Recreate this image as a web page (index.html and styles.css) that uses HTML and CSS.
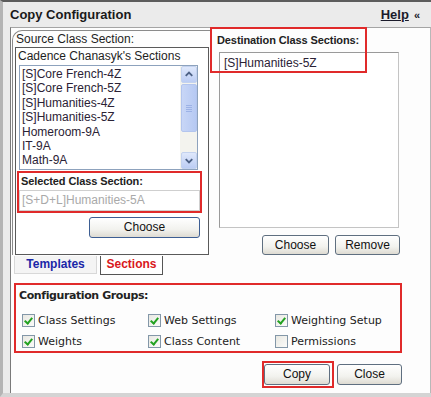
FILE: index.html
```html
<!DOCTYPE html>
<html>
<head>
<meta charset="utf-8">
<link rel="stylesheet" href="styles.css">
</head>
<body>
<div class="win">
  <div class="titlebar">
    <span class="title">Copy Configuration</span>
    <span class="helpwrap"><a class="help">Help</a><span class="raquo">«</span></span>
  </div>
  <div class="panel">
    <div class="top">
      <div class="left">
        <div class="tabpanel">
          <div class="srclabel">Source Class Section:</div>
          <div class="inner">
            <div class="listhead">Cadence Chanasyk's Sections</div>
            <div class="listbox">
              <ul class="items">
                <li>[S]Core French-4Z</li>
                <li>[S]Core French-5Z</li>
                <li>[S]Humanities-4Z</li>
                <li>[S]Humanities-5Z</li>
                <li>Homeroom-9A</li>
                <li>IT-9A</li>
                <li>Math-9A</li>
              </ul>
              <div class="scrollbar">
                <div class="sb-btn"><svg width="15" height="15" viewBox="0 0 15 15"><path d="M4 9 L7.5 5.5 L11 9" fill="none" stroke="#4d6185" stroke-width="2"/></svg></div>
                <div class="sb-thumb"><span></span><span></span><span></span><span></span></div>
                <div class="sb-track"></div>
                <div class="sb-btn"><svg width="15" height="15" viewBox="0 0 15 15"><path d="M4 6 L7.5 9.5 L11 6" fill="none" stroke="#4d6185" stroke-width="2"/></svg></div>
              </div>
            </div>
            <div class="selected">
              <div class="sellabel">Selected Class Section:</div>
              <div class="seltext">[S+D+L]Humanities-5A</div>
            </div>
            <div class="btnrow-left"><button class="btn btn-blue btn-wide">Choose</button></div>
          </div>
        </div>
        <div class="tabs">
          <span class="tab tab-templates">Templates</span>
          <span class="tab tab-sections">Sections</span>
        </div>
      </div>
      <div class="right">
        <div class="destlabel">Destination Class Sections:</div>
        <div class="destlist"><div class="destitem">[S]Humanities-5Z</div></div>
        <div class="redmark"></div>
        <div class="btnrow-right">
          <button class="btn btn-choose2">Choose</button>
          <button class="btn btn-remove">Remove</button>
        </div>
      </div>
    </div>
    <div class="groups">
      <div class="groupslabel">Configuration Groups:</div>
      <div class="checks">
        <label class="chk"><span class="box on"></span>Class Settings</label>
        <label class="chk"><span class="box on"></span>Web Settings</label>
        <label class="chk"><span class="box on"></span>Weighting Setup</label>
        <label class="chk"><span class="box on"></span>Weights</label>
        <label class="chk"><span class="box on"></span>Class Content</label>
        <label class="chk"><span class="box"></span>Permissions</label>
      </div>
    </div>
    <div class="actions">
      <span class="copywrap"><button class="btn btn-copy">Copy</button></span>
      <button class="btn btn-close">Close</button>
    </div>
  </div>
</div>
</body>
</html>
```

FILE: styles.css
```css
* { box-sizing: border-box; }
html, body { margin: 0; padding: 0; }
body { width: 431px; height: 397px; overflow: hidden; font-family: "Liberation Sans", Arial, sans-serif; }

.win {
  width: 431px;
  height: 397px;
  background: #ebebeb;
  border-top: 2px solid #5c5c5c;
  border-left: 3px solid #b4b4b4;
  border-bottom: 4px solid #d4d4d4;
  display: flex;
  flex-direction: column;
}

.titlebar {
  height: 25px;
  display: flex;
  align-items: center;
  justify-content: space-between;
  padding: 0 11px 0 7px;
}
.title { font-weight: bold; font-size: 13px; color: #1a1a1a; }
.helpwrap { font-weight: bold; font-size: 12px; color: #1a1a2a; display: flex; align-items: center; gap: 5px; }
.help { text-decoration: underline; color: #1a1a2a; font-size: 13px; }
.raquo { font-size: 11px; }

.panel {
  flex: 1;
  margin-left: 7px;
  background: #fdfdfd;
  border-top: 1px solid #a4a4a4;
  border-left: 1px solid #7a7a7a;
  border-right: 1px solid #b8b8b8;
  display: flex;
  flex-direction: column;
}

.top { display: flex; }
.left { margin-left: 1px; margin-top: 2px; width: 198px; }
.tabpanel {
  border-top: 1px solid #8a8a8a;
  border-left: 1px solid #8a8a8a;
  border-top-left-radius: 10px;
  padding-left: 2px;
}
.srclabel { font-size: 12px; line-height: 16px; padding-left: 1px; color: #1e1e1e; }
.inner {
  width: 194px;
  height: 208px;
  border: 1px solid #5a5a5a;
  padding-left: 2px;
  background: #fff;
}
.listhead { font-size: 12px; line-height: 17px; color: #1e1e1e; }
.listbox {
  margin-left: 1px;
  width: 179px;
  height: 105px;
  border: 1px solid #8da2bd;
  display: flex;
  justify-content: space-between;
  background: #fff;
}
.items { list-style: none; margin: 0; padding: 1px 0 0 2px; font-size: 12px; line-height: 14.4px; color: #2b2235; }
.scrollbar { width: 17px; display: flex; flex-direction: column; background: #f3f3ee; }
.sb-btn {
  width: 16px; height: 17px;
  margin: 0 0 0 1px;
  background: linear-gradient(#dfe8fb, #bccdf4);
  border: 1px solid #c3d2ef;
  border-radius: 2px;
  display: flex; align-items: center; justify-content: center;
}
.sb-thumb {
  margin: 1px 0 0 1px;
  width: 16px; height: 48px;
  background: linear-gradient(90deg, #c8d6f6, #b6c9f3);
  border: 1px solid #b3c5ee;
  border-radius: 2px;
  display: flex; flex-direction: column; align-items: center; justify-content: center; gap: 1px;
}
.sb-thumb span { width: 6px; height: 1px; background: #e6eefc; border-bottom: 1px solid #9cb2e6; }
.sb-track { flex: 1; }

.selected {
  margin-left: -1px;
  margin-top: 1px;
  width: 185px;
  height: 42px;
  border: 2px solid #e02a2a;
  background: #fff;
}
.sellabel { font-size: 11px; font-weight: bold; line-height: 17px; padding-left: 2px; color: #222; letter-spacing: -0.1px; }
.seltext { height: 21px; border: 1px solid #cfcfcf; color: #a9a9a9; font-size: 12px; line-height: 19px; padding-left: 2px; }

.btnrow-left { margin-top: 4px; padding-left: 71px; }

.btn {
  font-family: "Liberation Sans", Arial, sans-serif;
  font-size: 12px;
  color: #111;
  padding: 0;
  border: 1px solid #5f6f80;
  border-radius: 3px;
  background: linear-gradient(#ffffff, #f2f2ee 60%, #dedbd2);
  height: 20px;
  line-height: 17px;
  display: block;
}
.btn-blue { border-color: #3d5e93; }
.btn-wide { width: 111px; height: 21px; }

.tabs { display: flex; gap: 3px; margin-top: 1px; margin-left: 2px; }
.tab { font-size: 12px; font-weight: bold; height: 18px; line-height: 16px; text-align: center; }
.tab-templates { width: 83px; color: #1b27a8; border: 1px solid #d8d8d8; border-top: none; background: #f4f4f4; }
.tab-sections { width: 63px; color: #d9171c; border: 1px solid #555; border-top: none; background: #fff; height: 19px; }

.right { position: relative; flex: 1; }
.destlabel { margin-top: 4px; padding-left: 7px; font-size: 11px; font-weight: bold; line-height: 16px; color: #222; letter-spacing: -0.1px; }
.destlist {
  margin-top: 4px;
  margin-left: 9px;
  width: 180px;
  height: 176px;
  border: 1px solid #9a9a9a;
  border-right-color: #c4c4c4;
  border-bottom-color: #c4c4c4;
  background: #fff;
}
.destitem { font-size: 12px; line-height: 16px; padding: 2px 0 0 4px; color: #2b2235; }
.redmark {
  position: absolute;
  left: 0; top: -1px;
  width: 157px; height: 46px;
  border: 2px solid #e02a2a;
}
.btnrow-right { display: flex; justify-content: flex-end; gap: 6px; margin-top: 7px; padding-right: 30px; }
.btn-choose2 { width: 67px; }
.btn-remove { width: 65px; }

.groups {
  margin-top: 8px;
  margin-left: 3px;
  width: 388px;
  height: 70px;
  border: 2px solid #e02a2a;
  font-family: "DejaVu Sans", Verdana, sans-serif;
}
.groupslabel { font-size: 11px; font-weight: bold; padding: 4px 0 0 3px; line-height: 14px; color: #222; letter-spacing: -0.4px; }
.checks {
  margin-top: 11px;
  padding-left: 6px;
  display: grid;
  grid-template-columns: 126px 127px 1fr;
  row-gap: 8px;
}
.chk { display: flex; align-items: center; font-size: 11px; color: #222; height: 13px; gap: 3px; letter-spacing: 0; }
.box {
  width: 13px; height: 13px;
  border: 1px solid #8397a8;
  background: linear-gradient(135deg, #e8e8e2, #fbfbf9);
  display: inline-block;
  position: relative;
  flex: none;
}
.box.on::after {
  content: "";
  position: absolute;
  left: 3px; top: 1px;
  width: 3px; height: 6px;
  border-right: 2px solid #23a221;
  border-bottom: 2px solid #23a221;
  transform: rotate(40deg);
}

.actions { display: flex; justify-content: flex-end; align-items: center; margin-top: 8px; padding-right: 28px; }
.copywrap { border: 2px solid #e02a2a; padding: 1px 2px 1px 0; display: block; }
.btn-copy { width: 66px; height: 21px; }
.btn-close { width: 65px; height: 21px; margin-left: 3px; }
```
